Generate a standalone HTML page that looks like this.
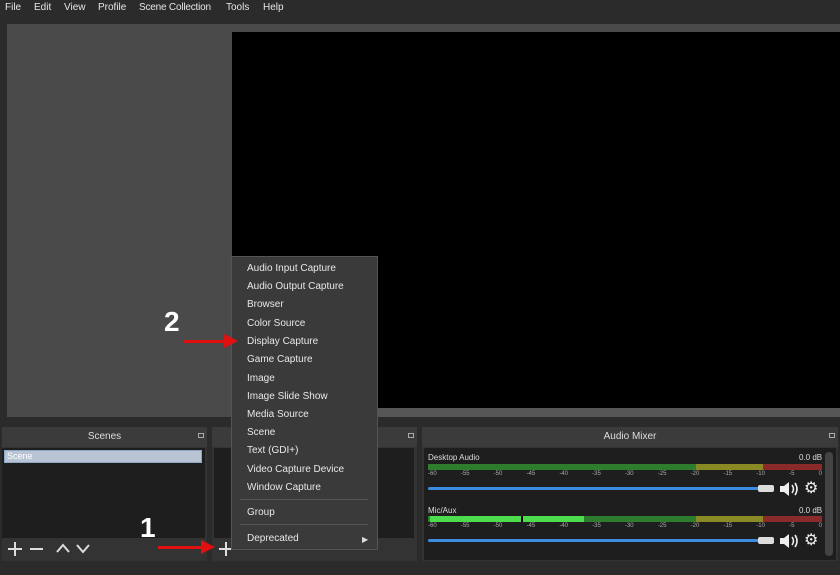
<!DOCTYPE html>
<html><head><meta charset="utf-8"><style>
*{margin:0;padding:0;box-sizing:border-box}
body{width:840px;height:575px;background:#2b2b2b;font-family:"Liberation Sans",sans-serif;font-size:11px;color:#ddd;position:relative;overflow:hidden}
.a{position:absolute}
.mb{position:absolute;top:2px;font-size:10px;color:#e6e6e6}
.hdr{background:#3b3b3b;height:20px;text-align:center;line-height:20px;color:#ddd;font-size:10px}
.mi{position:absolute;left:15px;font-size:10px;color:#e8e8e8}
.meter{position:absolute;left:428px;width:394px;height:6px;background:linear-gradient(90deg,#2e7d2e 0,#2e7d2e 68%,#8a8a25 68%,#8a8a25 85%,#8a2a2a 85%)}
.tick{position:absolute;left:428px;width:394px;font-size:6px;color:#aaa;display:flex;justify-content:space-between}
.fader{position:absolute;left:428px;width:332px;height:3px;background:#3c8ce0;border-radius:2px}
.knob{position:absolute;left:758px;width:16px;height:7px;background:#ddd;border-radius:2px}
</style></head><body>
<div class="mb" style="left:5px">File</div>
<div class="mb" style="left:34px">Edit</div>
<div class="mb" style="left:64px">View</div>
<div class="mb" style="left:98px">Profile</div>
<div class="mb" style="left:139px;letter-spacing:-0.2px">Scene Collection</div>
<div class="mb" style="left:226px">Tools</div>
<div class="mb" style="left:263px">Help</div>
<div class="a" style="left:7px;top:24px;width:833px;height:393px;background:#4a4a4a"></div>
<div class="a" style="left:232px;top:32px;width:608px;height:376px;background:#000"></div>
<div class="a" style="left:232px;top:408px;width:608px;height:9px;background:#565656"></div>

<!-- Scenes -->
<div class="a" style="left:2px;top:427px;width:205px;height:134px;background:#333"></div>
<div class="a hdr" style="left:2px;top:427px;width:205px">Scenes</div>
<div class="a" style="left:198px;top:433px;width:6px;height:5px;border:1px solid #aaa"></div>
<div class="a" style="left:2px;top:448px;width:203px;height:90px;background:#1e1e1e"></div>
<div class="a" style="left:4px;top:450px;width:198px;height:13px;background:#b8c4d4;border:1px solid #8ea6c8;color:#fff;font-size:9px;line-height:11px;padding-left:2px">Scene</div>
<div class="a" style="left:8px;top:548px;width:14px;height:2px;background:#ddd"></div>
<div class="a" style="left:14px;top:542px;width:2px;height:14px;background:#ddd"></div>
<div class="a" style="left:30px;top:548px;width:13px;height:2px;background:#ddd"></div>
<svg class="a" style="left:55px;top:542px" width="40" height="12"><path d="M2 10L8 3L14 10M22 3L28 10L34 3" stroke="#ddd" stroke-width="2" fill="none"/></svg>

<!-- Sources -->
<div class="a" style="left:212px;top:427px;width:205px;height:134px;background:#333"></div>
<div class="a hdr" style="left:212px;top:427px;width:205px"></div>
<div class="a" style="left:408px;top:433px;width:6px;height:5px;border:1px solid #aaa"></div>
<div class="a" style="left:214px;top:448px;width:200px;height:90px;background:#1e1e1e"></div>
<div class="a" style="left:219px;top:548px;width:14px;height:2px;background:#ddd"></div>
<div class="a" style="left:225px;top:542px;width:2px;height:14px;background:#ddd"></div>

<!-- Mixer -->
<div class="a" style="left:422px;top:427px;width:416px;height:134px;background:#333"></div>
<div class="a hdr" style="left:422px;top:427px;width:416px">Audio Mixer</div>
<div class="a" style="left:829px;top:433px;width:6px;height:5px;border:1px solid #aaa"></div>
<div class="a" style="left:424px;top:448px;width:412px;height:112px;background:#1e1e1e"></div>
<div class="a" style="left:825px;top:452px;width:8px;height:104px;background:#444;border-radius:4px"></div>
<div class="a" style="left:428px;top:453px;font-size:8px">Desktop Audio</div>
<div class="a" style="left:799px;top:453px;font-size:8px">0.0 dB</div>
<div class="meter" style="top:464px"></div>
<div class="tick" style="top:471px"><span>-60</span><span>-55</span><span>-50</span><span>-45</span><span>-40</span><span>-35</span><span>-30</span><span>-25</span><span>-20</span><span>-15</span><span>-10</span><span>-5</span><span>0</span></div>
<div class="fader" style="top:487px"></div><div class="knob" style="top:485px"></div>
<svg class="a" style="left:779px;top:481px" width="20" height="16"><path d="M1 5H5L10 1V15L5 11H1Z" fill="#eee"/><path d="M13 4Q16 8 13 12M16 2Q20 8 16 14" stroke="#eee" stroke-width="1.6" fill="none"/></svg>
<div class="a" style="left:804px;top:478px;font-size:16px;color:#eee">⚙</div>
<div class="a" style="left:428px;top:506px;font-size:8px">Mic/Aux</div>
<div class="a" style="left:799px;top:506px;font-size:8px">0.0 dB</div>
<div class="meter" style="top:516px"></div>
<div class="a" style="left:430px;top:516px;width:154px;height:6px;background:#4cdc4c"></div>
<div class="a" style="left:521px;top:516px;width:2px;height:6px;background:#000"></div>
<div class="tick" style="top:523px"><span>-60</span><span>-55</span><span>-50</span><span>-45</span><span>-40</span><span>-35</span><span>-30</span><span>-25</span><span>-20</span><span>-15</span><span>-10</span><span>-5</span><span>0</span></div>
<div class="fader" style="top:539px"></div><div class="knob" style="top:537px"></div>
<svg class="a" style="left:779px;top:533px" width="20" height="16"><path d="M1 5H5L10 1V15L5 11H1Z" fill="#eee"/><path d="M13 4Q16 8 13 12M16 2Q20 8 16 14" stroke="#eee" stroke-width="1.6" fill="none"/></svg>
<div class="a" style="left:804px;top:530px;font-size:16px;color:#eee">⚙</div>

<!-- Context menu -->
<div class="a" style="left:231px;top:256px;width:147px;height:294px;background:#3a3a3a;border:1px solid #555">
<div class="mi" style="top:6px">Audio Input Capture</div>
<div class="mi" style="top:24px">Audio Output Capture</div>
<div class="mi" style="top:42px">Browser</div>
<div class="mi" style="top:61px">Color Source</div>
<div class="mi" style="top:79px">Display Capture</div>
<div class="mi" style="top:97px">Game Capture</div>
<div class="mi" style="top:116px">Image</div>
<div class="mi" style="top:134px">Image Slide Show</div>
<div class="mi" style="top:152px">Media Source</div>
<div class="mi" style="top:170px">Scene</div>
<div class="mi" style="top:188px">Text (GDI+)</div>
<div class="mi" style="top:207px">Video Capture Device</div>
<div class="mi" style="top:225px">Window Capture</div>
<div class="a" style="left:8px;top:242px;width:128px;height:1px;background:#555"></div>
<div class="mi" style="top:250px">Group</div>
<div class="a" style="left:8px;top:267px;width:128px;height:1px;background:#555"></div>
<div class="mi" style="top:276px">Deprecated</div>
<div class="a" style="left:130px;top:278px;font-size:8px;color:#ddd">▶</div>
</div>

<!-- annotations -->
<div class="a" style="left:164px;top:306px;font-size:28px;font-weight:bold;color:#fff">2</div>
<div class="a" style="left:183px;top:340px;width:48px;height:3px;background:#e01010"></div>
<svg class="a" style="left:224px;top:334px" width="14" height="14"><path d="M0 0L14 7L0 14Z" fill="#e01010"/></svg>
<div class="a" style="left:140px;top:512px;font-size:28px;font-weight:bold;color:#fff">1</div>
<div class="a" style="left:158px;top:546px;width:50px;height:3px;background:#e01010"></div>
<svg class="a" style="left:201px;top:540px" width="14" height="14"><path d="M0 0L14 7L0 14Z" fill="#e01010"/></svg>
</body></html>
